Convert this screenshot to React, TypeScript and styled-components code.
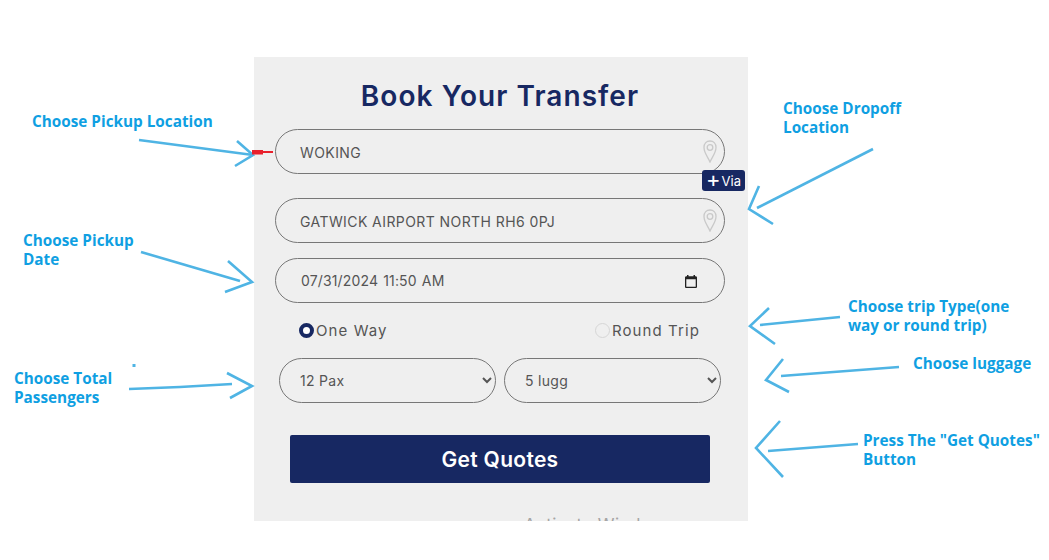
import React from 'react'
import styled, { createGlobalStyle } from 'styled-components'

const GlobalStyle = createGlobalStyle`
  html, body {
    margin: 0;
    padding: 0;
    background: #fff;
  }
`

const NAVY = '#172862'
const TEXT = '#555'
const FONT = `Inter, 'Open Sans', sans-serif`

const arrows = [
  { line: '139,140 253,155', head: '237,141 253,155 235,166' },
  { line: '141,252 240,281', head: '228,261 252,282 225,292' },
  { line: '129,389 180,387 232,384', head: '227,373 252,386 230,398' },
  { line: '873,149 757,208', head: '759,186 749,209 773,224' },
  { line: '840,317 760,325', head: '769,308 750,326 775,344' },
  { line: '899,367 781,376', head: '783,359 766,380 789,392' },
  { line: '858,444 768,451', head: '780,421 756,448 783,477' },
]

const labels = [
  { x: 32, y: 112, lines: ['Choose Pickup Location'] },
  { x: 23, y: 231, lines: ['Choose Pickup', 'Date'] },
  { x: 14, y: 369, lines: ['Choose Total', 'Passengers'] },
  { x: 783, y: 99, lines: ['Choose Dropoff', 'Location'] },
  { x: 848, y: 297, lines: ['Choose trip Type(one', 'way or round trip)'] },
  { x: 913, y: 354, lines: ['Choose luggage'] },
  { x: 863, y: 431, lines: ['Press The "Get Quotes"', 'Button'] },
]

const PinIcon = () => (
  <Pin viewBox="0 0 14 23" fill="none" stroke="#c9c9c9" strokeWidth="1.3">
    <path d="M7 22 C5 17 1 13 1 7.5 C1 3.6 3.6 1 7 1 C10.4 1 13 3.6 13 7.5 C13 13 9 17 7 22 Z" />
    <circle cx="7" cy="7.5" r="2.8" />
  </Pin>
)

const CalendarIcon = () => (
  <Calendar viewBox="0 0 12 13">
    <path
      fill="#222"
      d="M2 0h1.5v1.3h5V0H10v1.3h.7c.7 0 1.3.6 1.3 1.3v9.1c0 .7-.6 1.3-1.3 1.3H1.3C.6 13 0 12.4 0 11.7V2.6c0-.7.6-1.3 1.3-1.3H2V0zM1.3 4.2v7.5h9.4V4.2H1.3z"
    />
  </Calendar>
)

export default function App() {
  return (
    <Canvas>
      <GlobalStyle />
      <Panel>
        <Title>Book Your Transfer</Title>
        <Field>
          <FieldText>WOKING</FieldText>
          <PinIcon />
          <ViaBadge>
            <Plus>+</Plus>Via
          </ViaBadge>
        </Field>
        <Field $top={24}>
          <FieldText>GATWICK AIRPORT NORTH RH6 0PJ</FieldText>
          <PinIcon />
        </Field>
        <Field $top={15}>
          <DateText>07/31/2024 11:50 AM</DateText>
          <CalendarIcon />
        </Field>
        <TripRow>
          <TripOption>
            <Radio $checked />
            One Way
          </TripOption>
          <TripOption>
            <Radio />
            Round Trip
          </TripOption>
        </TripRow>
        <SelectRow>
          <Select defaultValue="12 Pax">
            <option>12 Pax</option>
          </Select>
          <Select defaultValue="5 lugg">
            <option>5 lugg</option>
          </Select>
        </SelectRow>
        <QuoteButton>Get Quotes</QuoteButton>
        <Watermark>Activate Windows</Watermark>
      </Panel>

      <Overlay viewBox="0 0 1049 560">
        {arrows.map((a) => (
          <g key={a.line}>
            <polyline points={a.line} />
            <polyline points={a.head} />
          </g>
        ))}
        <RedMark d="M252 150 L263 150 L263 151 L273 151 L273 153 L263 153 L263 154.500 L252 154.500 Z" />
        <Speck x="132.500" y="364" width="3" height="3" />
      </Overlay>

      {labels.map((l) => (
        <Note key={l.lines[0]} $x={l.x} $y={l.y}>
          {l.lines.map((t) => (
            <div key={t}>{t}</div>
          ))}
        </Note>
      ))}
    </Canvas>
  )
}

const Canvas = styled.div`
  position: relative;
  width: 1049px;
  height: 560px;
  overflow: hidden;
  padding: 57px 0 0 254px;
  box-sizing: border-box;
  background: #fff;
`

const Panel = styled.div`
  position: relative;
  width: 494px;
  height: 464px;
  box-sizing: border-box;
  padding: 19px 23px 0 21px;
  background: #efefef;
  overflow: hidden;
  font-family: ${FONT};
`

const Title = styled.h1`
  margin: 0 0 13px;
  height: 40px;
  line-height: 40px;
  text-align: center;
  font-size: 28px;
  font-weight: 600;
  letter-spacing: 1.05px;
  color: ${NAVY};
`

const Field = styled.div<{ $top?: number }>`
  position: relative;
  display: flex;
  align-items: center;
  justify-content: space-between;
  height: 45px;
  box-sizing: border-box;
  margin-top: ${(p) => p.$top ?? 0}px;
  padding: 0 7px 0 24px;
  border: 1px solid #777;
  border-radius: 23px;
`

const FieldText = styled.span`
  padding-top: 1px;
  font-size: 14px;
  letter-spacing: 0.42px;
  color: ${TEXT};
`

const DateText = styled(FieldText)`
  margin-left: 1px;
  padding-top: 0;
  padding-bottom: 1px;
  letter-spacing: 0.15px;
  word-spacing: 1px;
`

const Pin = styled.svg`
  width: 14px;
  height: 23px;
`

const Calendar = styled.svg`
  width: 12px;
  height: 13px;
  margin-right: 20px;
  margin-top: 2px;
`

const ViaBadge = styled.div`
  position: absolute;
  top: 40px;
  right: -21px;
  display: flex;
  align-items: center;
  justify-content: center;
  gap: 1px;
  width: 43px;
  height: 21px;
  border-radius: 3px;
  background: ${NAVY};
  color: #fff;
  font-size: 13px;
`

const Plus = styled.span`
  margin-top: -3px;
  font-size: 22px;
  line-height: 20px;
  font-weight: 400;
`

const TripRow = styled.div`
  display: flex;
  justify-content: space-between;
  align-items: center;
  height: 24px;
  margin-top: 15px;
  padding: 0 25px 0 24px;
`

const TripOption = styled.div`
  display: flex;
  align-items: center;
  gap: 2px;
  font-size: 15px;
  letter-spacing: 1.1px;
  color: ${TEXT};
`

const Radio = styled.span<{ $checked?: boolean }>`
  width: 15px;
  height: 15px;
  box-sizing: border-box;
  border-radius: 50%;
  background: ${(p) => (p.$checked ? '#fff' : 'transparent')};
  border: ${(p) => (p.$checked ? `4px solid ${NAVY}` : '1px solid #d6d6d6')};
`

const SelectRow = styled.div`
  display: grid;
  grid-template-columns: 1fr 1fr;
  gap: 8px;
  margin-top: 16px;
  padding: 0 4px;
`

const Select = styled.select`
  height: 45px;
  padding: 0 0 0 16px;
  border: 1px solid #777;
  border-radius: 23px;
  background: transparent;
  font-family: ${FONT};
  font-size: 14px;
  letter-spacing: 0.3px;
  color: ${TEXT};
`

const QuoteButton = styled.button`
  display: block;
  width: 420px;
  height: 48px;
  margin: 32px 15px 0;
  border: none;
  border-radius: 2px;
  background: ${NAVY};
  color: #fff;
  font-family: ${FONT};
  font-size: 21px;
  font-weight: 600;
  letter-spacing: 0.3px;
`

const Watermark = styled.div`
  position: absolute;
  left: 270px;
  top: 458px;
  font-size: 17px;
  letter-spacing: 0.4px;
  color: #a5a5a5;
`

const Overlay = styled.svg`
  position: absolute;
  inset: 0;
  width: 1049px;
  height: 560px;
  pointer-events: none;
  fill: none;
  stroke: #4fb4e4;
  stroke-width: 2.6;
`

const RedMark = styled.path`
  fill: #e8202c;
  stroke: none;
`

const Speck = styled.rect`
  fill: #4fb4e4;
  stroke: none;
`

const Note = styled.div<{ $x: number; $y: number }>`
  position: absolute;
  left: ${(p) => p.$x}px;
  top: ${(p) => p.$y}px;
  font-family: 'Open Sans', sans-serif;
  font-size: 15.3px;
  font-weight: 700;
  line-height: 19px;
  white-space: nowrap;
  color: #0f9fe2;
`
